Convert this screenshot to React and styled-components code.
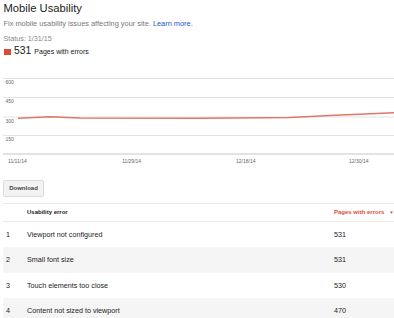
import React from "react";
import styled, { createGlobalStyle } from "styled-components";

const Global = createGlobalStyle`
  html, body { margin: 0; padding: 0; background: #fff; }
  body { font-family: "Liberation Sans", Arial, sans-serif; color: #222; }
`;

const Page = styled.div`
  width: 394px;
  height: 318px;
  overflow: hidden;
  padding-left: 3px;
  box-sizing: border-box;
`;

const Title = styled.h1`
  margin: 0;
  font-size: 11.2px;
  font-weight: normal;
  line-height: 16.6px;
  color: #222;
  padding-left: 0.5px;
`;

const Desc = styled.p`
  margin: 2.7px 0 0;
  font-size: 7.4px;
  line-height: 10px;
  color: #777;
  padding-left: 0.5px;
`;

const Link = styled.a`
  color: #1a55cc;
  text-decoration: none;
`;

const Status = styled.div`
  margin-top: 4.6px;
  font-size: 7.2px;
  line-height: 10px;
  color: #888;
  padding-left: 0.5px;
`;

const CountRow = styled.div`
  display: flex;
  align-items: baseline;
  margin-top: 1.6px;
  height: 12px;
  line-height: 12px;
  padding-left: 1px;
`;

const Swatch = styled.span`
  display: inline-block;
  width: 6.5px;
  height: 6.5px;
  background: #dd4b39;
  margin-right: 3.5px;
  align-self: center;
  position: relative;
  top: 0.5px;
`;

const Big = styled.span`
  font-size: 10.4px;
  color: #222;
  margin-right: 3px;
`;

const Small = styled.span`
  font-size: 7px;
  color: #222;
`;

const Chart = styled.svg`
  display: block;
  margin-top: 12.5px;
  width: 391px;
  height: 96px;
  font-family: "Liberation Sans", Arial, sans-serif;
`;

const Button = styled.button`
  display: block;
  margin-top: 14px;
  width: 41px;
  height: 17px;
  padding: 0;
  background: #f3f3f3;
  border: 1px solid #dcdcdc;
  border-radius: 2px;
  font-family: "Liberation Sans", Arial, sans-serif;
  font-size: 6px;
  font-weight: bold;
  color: #444;
`;

const Table = styled.div`
  margin-top: 6px;
  width: 391px;
  border-top: 1px solid #ebebeb;
`;

const Row = styled.div`
  display: grid;
  grid-template-columns: 24px 307px 60px;
  align-items: center;
  height: ${(p) => (p.$header ? "17px" : "25.3px")};
  background: ${(p) => (p.$shade ? "#f5f5f5" : "transparent")};
  border-bottom: ${(p) => (p.$header ? "1px solid #ebebeb" : "none")};
  font-size: ${(p) => (p.$header ? "6px" : "7.2px")};
  font-weight: ${(p) => (p.$header ? "bold" : "normal")};
  color: #222;
`;

const Cell = styled.div`
  padding-left: ${(p) => p.$pad || 0}px;
  color: ${(p) => p.$color || "inherit"};
  white-space: nowrap;
`;

const Arrow = styled.span`
  font-size: 4.5px;
  margin-left: 5px;
  position: relative;
  top: -0.5px;
`;

const rows = [
  ["1", "Viewport not configured", "531"],
  ["2", "Small font size", "531"],
  ["3", "Touch elements too close", "530"],
  ["4", "Content not sized to viewport", "470"],
];

const grid = [
  { y: 8.5, label: "600" },
  { y: 27.5, label: "450" },
  { y: 47, label: "300" },
  { y: 65.5, label: "150" },
];

const xLabels = [
  { x: 5, t: "11/11/14" },
  { x: 119, t: "11/29/14" },
  { x: 233, t: "12/18/14" },
  { x: 346, t: "12/30/14" },
];

export default function App() {
  return (
    <Page>
      <Global />
      <Title>Mobile Usability</Title>
      <Desc>
        Fix mobile usability issues affecting your site. <Link href="#">Learn more.</Link>
      </Desc>
      <Status>Status: 1/31/15</Status>
      <CountRow>
        <Swatch />
        <Big>531</Big>
        <Small>Pages with errors</Small>
      </CountRow>
      <Chart viewBox="0 0 391 96">
        {grid.map((g) => (
          <g key={g.label}>
            <line x1="0" x2="391" y1={g.y} y2={g.y} stroke="#e3e3e3" strokeWidth="1" />
            <text x="2.5" y={g.y + 5.7} fontSize="5" fill="#666">
              {g.label}
            </text>
          </g>
        ))}
        <line x1="0" x2="391" y1="84" y2="84" stroke="#c8c8c8" strokeWidth="1.2" />
        <polyline
          points="15,48.3 47,46.7 77,48 197,48.3 287,47.5 327,45.5 391,42.7"
          fill="none"
          stroke="#e3746a"
          strokeWidth="1.4"
          strokeLinejoin="round"
        />
        {xLabels.map((l) => (
          <text key={l.t} x={l.x} y="92.7" fontSize="5" fill="#666">
            {l.t}
          </text>
        ))}
      </Chart>
      <Button>Download</Button>
      <Table>
        <Row $header>
          <Cell />
          <Cell>Usability error</Cell>
          <Cell $color="#dd4b39">
            Pages with errors<Arrow>▼</Arrow>
          </Cell>
        </Row>
        {rows.map((r, i) => (
          <Row key={r[0]} $shade={i % 2 === 1}>
            <Cell $pad={3}>{r[0]}</Cell>
            <Cell>{r[1]}</Cell>
            <Cell>{r[2]}</Cell>
          </Row>
        ))}
      </Table>
    </Page>
  );
}
